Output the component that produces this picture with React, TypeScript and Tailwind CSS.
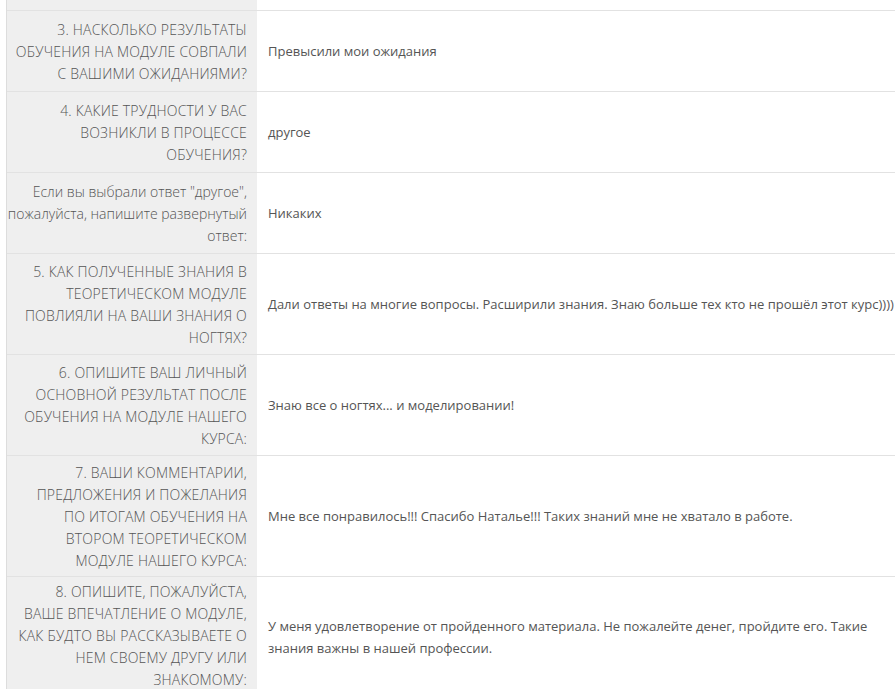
const rows: { q: string[]; a: string[]; h: string; pad: string; caps?: boolean }[] = [
  {
    q: ['3. НАСКОЛЬКО РЕЗУЛЬТАТЫ', 'ОБУЧЕНИЯ НА МОДУЛЕ СОВПАЛИ', 'С ВАШИМИ ОЖИДАНИЯМИ?'],
    a: ['Превысили мои ожидания'],
    h: 'h-[81px]',
    pad: 'pt-[2px]',
    caps: true,
  },
  {
    q: ['4. КАКИЕ ТРУДНОСТИ У ВАС', 'ВОЗНИКЛИ В ПРОЦЕССЕ', 'ОБУЧЕНИЯ?'],
    a: ['другое'],
    h: 'h-[81px]',
    pad: 'pt-[2px]',
    caps: true,
  },
  {
    q: ['Если вы выбрали ответ "другое",', 'пожалуйста, напишите развернутый', 'ответ:'],
    a: ['Никаких'],
    h: 'h-[81px]',
    pad: 'pt-[2px]',
  },
  {
    q: ['5. КАК ПОЛУЧЕННЫЕ ЗНАНИЯ В', 'ТЕОРЕТИЧЕСКОМ МОДУЛЕ', 'ПОВЛИЯЛИ НА ВАШИ ЗНАНИЯ О', 'НОГТЯХ?'],
    a: ['Дали ответы на многие вопросы. Расширили знания. Знаю больше тех кто не прошёл этот курс))))'],
    h: 'h-[101px]',
    pad: 'pt-[2px]',
    caps: true,
  },
  {
    q: ['6. ОПИШИТЕ ВАШ ЛИЧНЫЙ', 'ОСНОВНОЙ РЕЗУЛЬТАТ ПОСЛЕ', 'ОБУЧЕНИЯ НА МОДУЛЕ НАШЕГО', 'КУРСА:'],
    a: ['Знаю все о ногтях... и моделировании!'],
    h: 'h-[101px]',
    pad: 'pt-[2px]',
    caps: true,
  },
  {
    q: ['7. ВАШИ КОММЕНТАРИИ,', 'ПРЕДЛОЖЕНИЯ И ПОЖЕЛАНИЯ', 'ПО ИТОГАМ ОБУЧЕНИЯ НА', 'ВТОРОМ ТЕОРЕТИЧЕСКОМ', 'МОДУЛЕ НАШЕГО КУРСА:'],
    a: ['Мне все понравилось!!! Спасибо Наталье!!! Таких знаний мне не хватало в работе.'],
    h: 'h-[121px]',
    pad: 'pt-[2px]',
    caps: true,
  },
  {
    q: ['8. ОПИШИТЕ, ПОЖАЛУЙСТА,', 'ВАШЕ ВПЕЧАТЛЕНИЕ О МОДУЛЕ,', 'КАК БУДТО ВЫ РАССКАЗЫВАЕТЕ О', 'НЕМ СВОЕМУ ДРУГУ ИЛИ', 'ЗНАКОМОМУ:'],
    a: [
      'У меня удовлетворение от пройденного материала. Не пожалейте денег, пройдите его. Такие',
      'знания важны в нашей профессии.',
    ],
    h: 'h-[121px]',
    pad: 'pb-[2px]',
    caps: true,
  },
];

export default function App() {
  return (
    <div className="w-[895px] h-[689px] overflow-hidden bg-white pl-[6px] font-['Open_Sans',sans-serif] text-[13px] text-[#555]">
      <div className="border-l border-[#dddddd] min-h-full">
        {/* кусочек предыдущей строки сверху */}
        <div className="flex h-[10px]">
          <div className="w-[250px] shrink-0 bg-[#efefef]" />
          <div className="flex-1" />
        </div>

        {rows.map((row, i) => (
          <div key={i} className={`flex border-t border-[#e2e2e2] ${row.h}`}>
            <div
              className={`w-[250px] shrink-0 bg-[#efefef] px-[10px] ${row.pad} flex items-center justify-end text-right text-[14px] leading-[22px] font-light whitespace-nowrap ${
                row.caps ? 'tracking-[0.2px]' : ''
              }`}
            >
              <div>
                {row.q.map((line, j) => (
                  <div key={j}>{line}</div>
                ))}
              </div>
            </div>
            <div className="flex-1 pl-[11px] pr-[4px] flex items-center leading-[22px] whitespace-nowrap">
              <div>
                {row.a.map((line, j) => (
                  <div key={j}>{line}</div>
                ))}
              </div>
            </div>
          </div>
        ))}
      </div>
    </div>
  );
}
